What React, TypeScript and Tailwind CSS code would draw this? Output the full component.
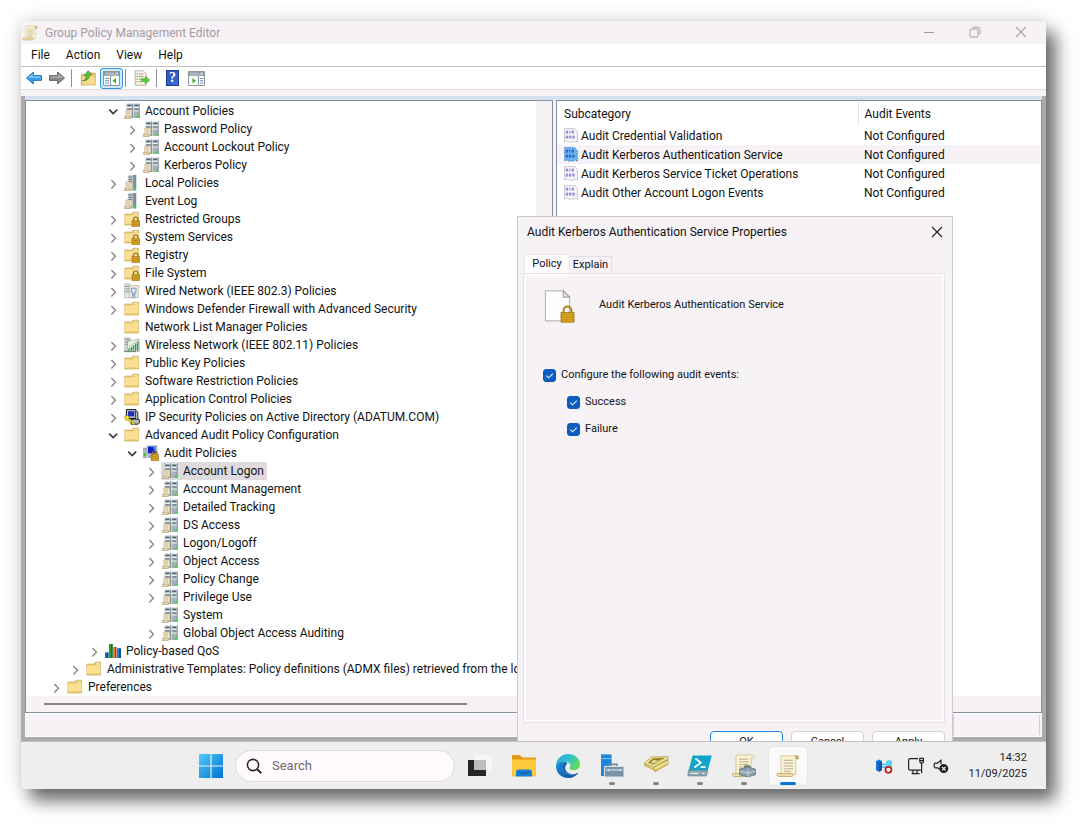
import type { ReactNode } from "react";

type IconName =
  | "servers"
  | "server"
  | "folder"
  | "folderLock"
  | "wired"
  | "wireless"
  | "ipsec"
  | "audit"
  | "qos";

type Node = {
  level: number;
  icon: IconName;
  label: string;
  open?: boolean;
  leaf?: boolean;
  selected?: boolean;
};

const tree: Node[] = [
  { level: 3, icon: "servers", label: "Account Policies", open: true },
  { level: 4, icon: "servers", label: "Password Policy" },
  { level: 4, icon: "servers", label: "Account Lockout Policy" },
  { level: 4, icon: "servers", label: "Kerberos Policy" },
  { level: 3, icon: "server", label: "Local Policies" },
  { level: 3, icon: "server", label: "Event Log", leaf: true },
  { level: 3, icon: "folderLock", label: "Restricted Groups" },
  { level: 3, icon: "folderLock", label: "System Services" },
  { level: 3, icon: "folderLock", label: "Registry" },
  { level: 3, icon: "folderLock", label: "File System" },
  { level: 3, icon: "wired", label: "Wired Network (IEEE 802.3) Policies" },
  { level: 3, icon: "folder", label: "Windows Defender Firewall with Advanced Security" },
  { level: 3, icon: "folder", label: "Network List Manager Policies", leaf: true },
  { level: 3, icon: "wireless", label: "Wireless Network (IEEE 802.11) Policies" },
  { level: 3, icon: "folder", label: "Public Key Policies" },
  { level: 3, icon: "folder", label: "Software Restriction Policies" },
  { level: 3, icon: "folder", label: "Application Control Policies" },
  { level: 3, icon: "ipsec", label: "IP Security Policies on Active Directory (ADATUM.COM)" },
  { level: 3, icon: "folder", label: "Advanced Audit Policy Configuration", open: true },
  { level: 4, icon: "audit", label: "Audit Policies", open: true },
  { level: 5, icon: "servers", label: "Account Logon", selected: true },
  { level: 5, icon: "servers", label: "Account Management" },
  { level: 5, icon: "servers", label: "Detailed Tracking" },
  { level: 5, icon: "servers", label: "DS Access" },
  { level: 5, icon: "servers", label: "Logon/Logoff" },
  { level: 5, icon: "servers", label: "Object Access" },
  { level: 5, icon: "servers", label: "Policy Change" },
  { level: 5, icon: "servers", label: "Privilege Use" },
  { level: 5, icon: "servers", label: "System", leaf: true },
  { level: 5, icon: "servers", label: "Global Object Access Auditing" },
  { level: 2, icon: "qos", label: "Policy-based QoS" },
  {
    level: 1,
    icon: "folder",
    label: "Administrative Templates: Policy definitions (ADMX files) retrieved from the local computer.",
  },
  { level: 0, icon: "folder", label: "Preferences" },
];

const indent = ["pl-[22px]", "pl-[41px]", "pl-[60px]", "pl-[79px]", "pl-[98px]", "pl-[117px]"];

const subcategories = [
  { name: "Audit Credential Validation", events: "Not Configured" },
  { name: "Audit Kerberos Authentication Service", events: "Not Configured", selected: true },
  { name: "Audit Kerberos Service Ticket Operations", events: "Not Configured" },
  { name: "Audit Other Account Logon Events", events: "Not Configured" },
];

/* ---------- small icons (16 x 16) ---------- */

function Glyph({ children, size = "size-4" }: { children: ReactNode; size?: string }) {
  return (
    <svg viewBox="0 0 16 16" className={`${size} shrink-0`} aria-hidden="true">
      {children}
    </svg>
  );
}

function MiniScroll() {
  return (
    <>
      <path d="M1.8 7h6v7.5h-6z" fill="#f3e7c6" stroke="#b3a27b" strokeWidth=".6" />
      <path d="M.4 13.2h6v2.3h-6z" fill="#e6d5aa" stroke="#a89873" strokeWidth=".6" />
      <path d="M3 9h3M3 11h3" stroke="#a49a86" strokeWidth=".6" />
    </>
  );
}

function Tower({ x }: { x: number }) {
  return (
    <g transform={`translate(${x} 0)`}>
      <path d="M0 1 1.8 0h4.4v15H0z" fill="#a3b1b9" />
      <path d="M0 1 1.8 0h4.4l-1 1.2H0z" fill="#dfe7ea" />
      <path d="M1 1.8h3.6v1H1z" fill="#3d474d" />
      <path d="M0 3.8h6.2V5H0zM0 7.6h6.2v.9H0z" fill="#e9eff1" />
      <path d="M1 5.6h3.8v.8H1z" fill="#5a6870" />
      <path d="M5.4.8h.8V15h-.8z" fill="#7b8b94" />
    </g>
  );
}

function ServerBase() {
  return (
    <>
      <path d="M3.8.8 5.8 0h6.4v15.400H3.800z" fill="#c4ced3" />
      <path d="M4.6 2h3.8M4.6 4.4h3.8M4.6 6.600h3.800" stroke="#56646c" strokeWidth=".9" />
      <path d="M9.2 0h3v15.400h-3z" fill="#7a8d98" />
    </>
  );
}

function TreeIcon({ name }: { name: IconName }) {
  switch (name) {
    case "servers":
      return (
        <Glyph>
          <Tower x={2.6} />
          <Tower x={9.4} />
          <MiniScroll />
          <path d="M12.800 12.600h2v2h-2z" fill="#35e021" />
        </Glyph>
      );
    case "server":
      return (
        <Glyph>
          <ServerBase />
          <path d="M9.800 12.600h2v2h-2z" fill="#35e021" />
          <MiniScroll />
        </Glyph>
      );
    case "folder":
    case "folderLock":
      return (
        <Glyph>
          <path d="M.8 3h7l1.2-1.8h5.6v12.9H.8z" fill="#e9c96e" stroke="#c9a652" strokeWidth=".6" />
          <path d="M9.6 2h4.2v1.5H9.6z" fill="#fffbe9" stroke="#c9a652" strokeWidth=".4" />
          <path d="M1 4.6h8l1-1h4.4v10.2H1z" fill="#fbdf92" />
          <path d="M1 13.2h13.6" stroke="#d0a94f" strokeWidth=".8" />
          {name === "folderLock" && (
            <>
              <path d="M9.5 10V8.2a2.2 2.2 0 0 1 4.4 0V10" fill="none" stroke="#8a6d22" strokeWidth="1.2" />
              <path d="M8 9.6h7.6v6H8z" fill="#d7a323" stroke="#8f6a10" strokeWidth=".6" />
              <path d="M8.4 11.5h6.9M8.4 13.4h6.9" stroke="#a67c16" strokeWidth=".6" />
            </>
          )}
        </Glyph>
      );
    case "wired":
      return (
        <Glyph>
          <path d="M.6 1h5.800v14H.6z" fill="#dfe7ea" stroke="#9aa9b1" strokeWidth=".6" />
          <path d="M1.4 3.4h4M1.4 6h4M1.4 8.600h4" stroke="#6b7a82" strokeWidth=".8" />
          <path d="M5.400 2.600H14.500l1 1.400-1.300 1v9.600H5.400z" fill="#f1ecdf" stroke="#b0a68f" strokeWidth=".6" />
          <path d="M7.400 5.200h4.600v4.300h-1.200v2.400H8.600V9.500H7.400z" fill="#dbe8f5" stroke="#4a76a6" strokeWidth=".7" />
          <circle cx="9.700" cy="13.600" r="1.500" fill="#bcd6f2" stroke="#3c6ea6" strokeWidth=".5" />
        </Glyph>
      );
    case "wireless":
      return (
        <Glyph>
          <path d="M.8.8h5.4v13.4H.8z" fill="#d3dde1" stroke="#8a9aa2" strokeWidth=".6" />
          <path d="M1.6 2.6h3.6M1.6 5h3.6M1.6 7.4h3.6" stroke="#61717a" strokeWidth=".8" />
          <path d="M3.5 4.4 15.2 2v12.6H3.5z" fill="#e9efe4" stroke="#8e9a8a" strokeWidth=".6" />
          <path d="M4.3 13.8v-2.4h1.5v2.4zM6.6 13.8V9.9h1.5v3.9zM8.8 13.8V8.2h1.5v5.6zM11 13.8V6.4h1.4v7.4zM13 13.8V4.4h1.4v9.4z" fill="#2c9b58" />
          <path d="M4.2 10.2 14 3.6" stroke="#7cc39a" strokeWidth=".6" />
          <path d="M0 14.6h12" stroke="#6f7f78" strokeWidth="1" />
        </Glyph>
      );
    case "ipsec":
      return (
        <Glyph>
          <path d="M2.4.6h9.4v8.8H2.4z" fill="#c9cdd2" stroke="#111" strokeWidth="1" />
          <path d="M4 2.2h6.4v5.2H4z" fill="#1a35b8" />
          <path d="M7 10.2h8l.6 3.4-1.4 1.6H7z" fill="#b9bdc1" stroke="#111" strokeWidth=".9" />
          <path d="M11.8 1.6l2 1.6v7" fill="none" stroke="#222" strokeWidth="1" />
          <path d="M.6 7.4 3.4 6l2 2.4-.7 1.4 6.2 4.8-1 1.2-2-.6-.2-1.4-1.4-.2-2-2.2L1.6 11z" fill="#f7e51a" stroke="#6b6208" strokeWidth=".5" />
        </Glyph>
      );
    case "audit":
      return (
        <Glyph>
          <path d="M.4 3h3v9.8h-3z" fill="#aab4ba" stroke="#7a868d" strokeWidth=".5" />
          <path d="M1 8h1.5v3H1z" fill="#3fbf3a" />
          <path d="M4 .8h10v8.6H4z" fill="#cdd6de" stroke="#8695a3" strokeWidth=".6" />
          <path d="M5 1.6h8v6.8H5z" fill="#0a1ec8" />
          <path d="M9.5 1.6H13v6.8z" fill="#3f8cf0" />
          <path d="M4.5 10h6v3h-6z" fill="#a7b1b8" />
          <path d="M9.5 10V8.2a2.2 2.2 0 0 1 4.4 0V10" fill="none" stroke="#8a6d22" strokeWidth="1.2" />
          <path d="M8 9.6h7.6v6H8z" fill="#dba524" stroke="#8f6a10" strokeWidth=".6" />
          <path d="M8.4 11.5h6.9M8.4 13.4h6.9" stroke="#a67c16" strokeWidth=".6" />
        </Glyph>
      );
    case "qos":
      return (
        <Glyph>
          <path d="M0 9.4h3.4V15H0z" fill="#0f6fc4" />
          <path d="M4 1h3.6v14H4z" fill="#2f9e3b" />
          <path d="M6 1h1.6v14H6z" fill="#187526" />
          <path d="M8 4h3.4v11H8z" fill="#e9794a" />
          <path d="M10 4h1.4v11H10z" fill="#a3401c" />
          <path d="M12 5.2h3.8V15H12z" fill="#1c86de" />
          <path d="M14.2 5.2h1.6V15h-1.6zM2.2 9.4h1.2V15H2.2z" fill="#0a3e78" />
        </Glyph>
      );
  }
}

function ScrollPaper({ size = "size-4" }: { size?: string }) {
  return (
    <Glyph size={size}>
      <path d="M3.4 1.2h10.2c1 0 1.6.6 1.4 1.6l-1.8.4v10.4H3.400z" fill="#fbf3d3" stroke="#cdbb8a" strokeWidth=".5" />
      <path d="M12.600 1.200h1.200c1.100 0 1.400 1 1 2h-1.600c.2-1-.2-1.500-.6-2z" fill="#d9be74" stroke="#a58c4c" strokeWidth=".4" />
      <path d="M.9 13h9.6c1.2 0 1.2 2-.2 2H2c-1.3 0-1.6-1.2-1.1-2z" fill="#f0dea8" stroke="#b8a060" strokeWidth=".5" />
      <path d="M5.2 4.2h6.2M5.2 6.1h6.2M5.2 8h6.2M5.2 9.9h6.2M5.2 11.6h4.6" stroke="#b0a78c" strokeWidth=".6" />
    </Glyph>
  );
}

function SubcategoryIcon({ selected }: { selected?: boolean }) {
  const ink = selected ? "#1560b8" : "#857bc9";
  return (
    <svg viewBox="0 0 14 15" className="h-[15px] w-[14px] shrink-0" aria-hidden="true">
      <path
        d="M.6.6h10l2.8 2.8v11l-2-1.4-1.6 1H4.4l-1.6-1-2.2 1z"
        fill={selected ? "#6fb3ef" : "#f6f5fb"}
        stroke={selected ? "#2e7fd0" : "#bdbcc6"}
        strokeWidth=".8"
        strokeDasharray={selected ? "1.2 .6" : undefined}
      />
      <g fill="none" stroke={ink} strokeWidth=".9">
        <path d="M2.2 3h1.400v2.200H2.200zM5.800 2.600v3M8 3h1.400v2.200H8z" />
        <path d="M2.200 8h1.400v2.200H2.200zM5.400 8h1.400v2.200H5.400zM8.800 8h1.400v2.200H8.800z" />
      </g>
    </svg>
  );
}

function Cross({ className = "" }: { className?: string }) {
  return (
    <svg viewBox="0 0 12 12" className={`size-3 ${className}`} aria-hidden="true">
      <path d="m1 1 10 10M11 1 1 11" stroke="currentColor" strokeWidth="1.1" />
    </svg>
  );
}

function Chevron({ open }: { open?: boolean }) {
  return (
    <svg viewBox="0 0 16 16" className="size-4" fill="none" aria-hidden="true">
      {open ? (
        <path d="m4.200 6.600 4 4 4-4" stroke="#3a3a3a" strokeWidth="1.600" />
      ) : (
        <path d="m6.400 5 4 4.200-4 4.200" stroke="#8c8c8c" strokeWidth="1.500" />
      )}
    </svg>
  );
}

/* ---------- window chrome ---------- */

function TitleBar() {
  return (
    <header className="flex h-[23px] items-center bg-[#f7f2f6] pr-0.5 pl-px text-[#a39da2]">
      <ScrollPaper />
      <h1 className="ml-[7px] flex-1 text-[12px]">Group Policy Management Editor</h1>
      <div className="flex h-[21px] items-center self-start">
        <button type="button" aria-label="Minimize" className="flex w-[46px] justify-center">
          <svg viewBox="0 0 12 12" className="size-3" aria-hidden="true">
            <path d="M1 6.5h10" stroke="currentColor" />
          </svg>
        </button>
        <button type="button" aria-label="Restore" className="flex w-[46px] justify-center">
          <svg viewBox="0 0 12 12" className="size-3" fill="none" stroke="currentColor" aria-hidden="true">
            <rect x="1" y="3" width="8" height="8" rx="1" />
            <path d="M3.5 1.2h5A2.4 2.4 0 0 1 11 3.6v5" />
          </svg>
        </button>
        <button type="button" aria-label="Close" className="flex w-[46px] justify-center">
          <Cross />
        </button>
      </div>
    </header>
  );
}

function MenuBar() {
  return (
    <nav className="flex h-[23px] items-center gap-4 border-b border-[#bfbfbf] bg-white pl-2.5 text-[12px]">
      {["File", "Action", "View", "Help"].map((item) => (
        <button key={item} type="button">
          {item}
        </button>
      ))}
    </nav>
  );
}

function Separator() {
  return <span className="h-[18px] w-px bg-[#8e8e8e]" />;
}

function PaneIcon({ mirrored }: { mirrored?: boolean }) {
  return (
    <svg viewBox="0 0 17 15" className="h-[15px] w-[17px]" aria-hidden="true">
      <path d="M.5.5h16v14H.5z" fill="#fbfcfc" stroke="#8d979d" />
      <path d="M1 1h15v4H1z" fill="#8b979f" />
      <path d="M2 2.200h9M2 4h13" stroke="#dfe5e8" strokeWidth=".7" />
      <path d="M12.400 2.200H15" stroke="#fff" strokeWidth="1" />
      {mirrored ? (
        <>
          <path d="M10.500 5v9.500" stroke="#8d979d" />
          <path d="M12 7.500h3M12 9.700h3M12 12h3" stroke="#5b86b5" strokeWidth=".9" />
          <path d="m4.500 7 3.400 2.800-3.400 2.800z" fill="#36ad2b" />
        </>
      ) : (
        <>
          <path d="M7.500 5v9.500" stroke="#8d979d" />
          <path d="M2 7.500h4M2 9.700h4M2 12h4" stroke="#5b86b5" strokeWidth=".9" />
          <path d="M12.900 7 9.500 9.800l3.400 2.800z" fill="#36ad2b" />
        </>
      )}
    </svg>
  );
}

function Toolbar() {
  return (
    <div className="flex h-[23px] items-center border-b border-[#dedcde] bg-white pl-[5px]">
      <button type="button" aria-label="Back">
        <Glyph>
          <path d="M.5 8 7.4 2v3.6h8.1v4.8H7.4V14z" fill="#35a0e8" stroke="#1b6fb5" strokeWidth=".9" />
          <path d="M2.2 7.8 6.6 4v2.4h8v1.4z" fill="#86cdf8" />
        </Glyph>
      </button>
      <button type="button" aria-label="Forward" className="ml-[7px]">
        <Glyph>
          <path d="M15.5 8 8.6 2v3.6H.5v4.8h8.1V14z" fill="#8a8a8a" stroke="#5c5c5c" strokeWidth=".9" />
          <path d="M13.8 7.8 9.4 4v2.4h-8v1.4z" fill="#b4b4b4" />
        </Glyph>
      </button>
      <span className="w-1.5" />
      <Separator />
      <button type="button" aria-label="Up one level" className="ml-2">
        <Glyph>
          <path d="M1.400 4.600h7.200l1.200-1.400h5.400v11.800H1.400z" fill="#f2cf7c" stroke="#b98f38" strokeWidth=".7" />
          <path d="M2 7h13v7.600H2z" fill="#f7d98f" />
          <path d="M2.600 10.600c2.400-.4 3.600-2.200 3.800-5H4L8.200.8l4 4H9.600c-.2 4.200-2.800 6.400-7 5.800z" fill="#58c23c" stroke="#2b7d19" strokeWidth=".6" />
        </Glyph>
      </button>
      <button
        type="button"
        aria-label="Show or hide the console tree"
        aria-pressed="true"
        className="ml-1 flex h-[21px] w-[23px] items-center justify-center rounded-[3px] border border-[#2f97dd] bg-[#cfe8fa]"
      >
        <PaneIcon />
      </button>
      <span className="w-0.5" />
      <Separator />
      <button type="button" aria-label="Export list" className="ml-2">
        <Glyph>
          <path d="M1.2.8h8l3 3v11.4h-11z" fill="#fdf9e6" stroke="#a3a08f" strokeWidth=".8" />
          <path d="M2.6 4h1M2.6 6.6h1M2.6 9.2h1M2.6 11.8h1" stroke="#4a4a4a" />
          <path d="M4.8 4h4.6M4.8 6.6h5M4.8 9.2h3M4.8 11.8h3" stroke="#9c9a8d" />
          <path d="M7.4 8.6h3.8V6.2l4.6 3.9-4.6 3.9v-2.5H7.4z" fill="#5ccb3a" stroke="#3b9a22" strokeWidth=".5" />
        </Glyph>
      </button>
      <span className="w-1.5" />
      <Separator />
      <button
        type="button"
        aria-label="Help"
        className="ml-[9px] h-4 w-[13px] border border-[#1f3b8d] bg-linear-to-br from-[#2b50b8] to-[#3f6fd8] font-['Liberation_Serif',serif] text-[14px] leading-[14px] font-bold text-white"
      >
        ?
      </button>
      <button type="button" aria-label="Show or hide the action pane" className="ml-[9px]">
        <PaneIcon mirrored />
      </button>
    </div>
  );
}

function ConsoleTree() {
  return (
    <section className="flex w-[528px] shrink-0 flex-col border border-[#878ea0] bg-[#f7f2f6]">
      <ul role="tree" className="mr-4 flex-1 overflow-hidden bg-white pt-px">
        {tree.map((node) => (
          <li
            key={node.label}
            role="treeitem"
            aria-expanded={node.leaf ? undefined : !!node.open}
            aria-selected={!!node.selected}
            className={`flex h-[18px] items-center whitespace-nowrap ${indent[node.level]}`}
          >
            {node.leaf ? (
              <span className="w-4 shrink-0" />
            ) : (
              <button type="button" aria-label={`Toggle ${node.label}`} className="shrink-0">
                <Chevron open={node.open} />
              </button>
            )}
            <span
              className={`ml-0.5 flex h-[18px] items-center gap-[5px] rounded-[2px] px-px text-[12px] ${
                node.selected ? "bg-[#dedadd]" : ""
              }`}
            >
              <TreeIcon name={node.icon} />
              <span className="pr-0.5">{node.label}</span>
            </span>
          </li>
        ))}
      </ul>
      <div className="flex h-4 items-center pl-[18px]">
        <span className="h-0.5 w-[423px] bg-[#868686]" />
      </div>
    </section>
  );
}

function SubcategoryList() {
  return (
    <section className="ml-[3px] flex min-w-0 flex-1 flex-col border border-[#878ea0] bg-white">
      <div className="flex-1 pt-px pr-px">
        <table className="w-full table-fixed text-left text-[12px]">
          <thead>
            <tr className="h-6">
              <th scope="col" className="w-[301px] border-r border-[#e4e2e4] pl-[7px] font-normal">
                Subcategory
              </th>
              <th scope="col" className="pl-1.5 font-normal">
                Audit Events
              </th>
            </tr>
          </thead>
          <tbody>
            {subcategories.map((row) => (
              <tr key={row.name} className={`h-[19px] ${row.selected ? "bg-[#f7f2f6]" : ""}`}>
                <td className="p-0 pl-[7px]">
                  <span className="flex items-center gap-[3px] whitespace-nowrap">
                    <SubcategoryIcon selected={row.selected} />
                    {row.name}
                  </span>
                </td>
                <td className="p-0 pl-1.5 whitespace-nowrap">{row.events}</td>
              </tr>
            ))}
          </tbody>
        </table>
      </div>
      <div className="h-4 bg-[#f7f2f6]" />
    </section>
  );
}

/* ---------- properties dialog ---------- */

function Check({ label, className = "" }: { label: string; className?: string }) {
  return (
    <label className={`flex h-[27px] items-center gap-[5px] ${className}`}>
      <span className="grid">
        <input
          type="checkbox"
          defaultChecked
          className="col-start-1 row-start-1 size-[13px] appearance-none rounded-[3px] border border-[#0a5bb8] bg-white checked:bg-[#0a5fc0]"
        />
        <svg viewBox="0 0 13 13" className="pointer-events-none col-start-1 row-start-1 size-[13px]" aria-hidden="true">
          <path d="m3.4 6.6 2.2 2.2 4.2-4.2" fill="none" stroke="#e9f2fb" strokeWidth="1.1" />
        </svg>
      </span>
      {label}
    </label>
  );
}

function PropertiesDialog() {
  return (
    <section
      role="dialog"
      aria-labelledby="dialog-title"
      className="absolute top-[195px] left-[496px] flex h-[560px] w-[436px] flex-col border border-[#cfcbce] bg-[#f7f2f6] px-1.5"
    >
      <header className="flex h-[30px] items-center justify-between pr-[3px] pl-[3px] text-[12px]">
        <h2 id="dialog-title">Audit Kerberos Authentication Service Properties</h2>
        <button type="button" aria-label="Close">
          <Cross className="text-[#1c1c1c]" />
        </button>
      </header>

      <div className="mt-[7px] text-[11px]">
        <div role="tablist" className="flex h-5 items-end">
          <button
            type="button"
            role="tab"
            aria-selected="true"
            className="h-5 w-[46px] rounded-t-[2px] border border-b-0 border-[#e8e3e7] bg-[#fefcfe]"
          >
            Policy
          </button>
          <button
            type="button"
            role="tab"
            aria-selected="false"
            className="h-[18px] w-[42px] border border-b-0 border-l-0 border-[#e3dfe2]"
          >
            Explain
          </button>
        </div>
        <div role="tabpanel" className="mr-0.5 h-[448px] border-2 border-[#fdfbfd] px-[17px] pt-3.5 outline outline-[#e6e3e8]">
          <div className="flex items-center gap-6">
            <svg viewBox="0 0 32 34" className="h-[34px] w-8" aria-hidden="true">
              <path d="M2.500.8h17.800l6.200 6.400v23.600h-24z" fill="#fefefe" stroke="#bdbabd" strokeWidth="1.200" />
              <path d="M20.300.8v6.400h6.200z" fill="#eceaec" stroke="#a5a2a5" strokeWidth="1.200" />
              <path d="M20.600 22.600v-2.200a3.900 3.900 0 0 1 7.800 0v2.200" fill="none" stroke="#a8831f" strokeWidth="2" />
              <path d="M18 22.400h13v9.800H18z" fill="#e0a921" stroke="#94700f" strokeWidth=".8" />
              <path d="M18.400 24.800h12.200M18.400 27.300h12.200M18.400 29.800h12.200" stroke="#b98712" strokeWidth=".9" />
            </svg>
            <p className="pb-1">Audit Kerberos Authentication Service</p>
          </div>
          <fieldset className="mt-[38px]">
            <Check label="Configure the following audit events:" />
            <Check label="Success" className="ml-6" />
            <Check label="Failure" className="ml-6" />
          </fieldset>
        </div>
        <div className="mt-[9px] mr-px flex justify-end gap-2">
          <button type="button" className="h-[22px] w-[73px] rounded-[4px] border border-[#2286dc] bg-white">
            OK
          </button>
          <button type="button" className="h-[22px] w-[73px] rounded-[4px] border border-[#d5d1d4] bg-white">
            Cancel
          </button>
          <button type="button" className="h-[22px] w-[73px] rounded-[4px] border border-[#d5d1d4] bg-white">
            Apply
          </button>
        </div>
      </div>
    </section>
  );
}

/* ---------- taskbar ---------- */

function AppIcon({ children }: { children: ReactNode }) {
  return (
    <svg viewBox="0 0 26 26" className="size-[26px]" aria-hidden="true">
      {children}
    </svg>
  );
}

function TaskButton({
  label,
  running,
  active,
  children,
}: {
  label: string;
  running?: boolean;
  active?: boolean;
  children: ReactNode;
}) {
  return (
    <button
      type="button"
      aria-label={label}
      className={`relative flex h-[38px] w-[38px] items-center justify-center rounded-[4px] ${
        active ? "bg-[#f9f9f9] shadow-[0_0_1px_#bbb]" : ""
      }`}
    >
      {children}
      {active && <span className="absolute bottom-0 left-[11px] h-[3px] w-4 rounded-full bg-[#0a74d6]" />}
      {running && <span className="absolute bottom-0 left-4 h-[3px] w-1.5 rounded-full bg-[#858585]" />}
    </button>
  );
}

function Taskbar() {
  return (
    <footer className="flex h-12 shrink-0 items-center border-t border-[#c3c1c3] bg-[#eeeeee] pr-[19px] pl-[178px] text-[#1f1f1f]">
      <button type="button" aria-label="Start">
        <svg viewBox="0 0 24 24" className="size-6" aria-hidden="true">
          <defs>
            <linearGradient id="start" x1="0" y1="0" x2="1" y2="1">
              <stop offset="0" stopColor="#50ccfb" />
              <stop offset="1" stopColor="#0070d0" />
            </linearGradient>
          </defs>
          <path d="M0 0h11.4v11.4H0zM12.6 0H24v11.4H12.6zM0 12.6h11.4V24H0zM12.6 12.6H24V24H12.6z" fill="url(#start)" />
        </svg>
      </button>

      <label className="ml-3 flex h-8 w-[220px] items-center rounded-full border border-[#dedade] bg-[#fefafe] pl-2.5">
        <svg viewBox="0 0 16 16" className="size-4" fill="none" stroke="#2b2b2b" strokeWidth="1.6" aria-hidden="true">
          <circle cx="7" cy="7" r="5.6" />
          <path d="m11.2 11.2 4 4" strokeWidth="2" />
        </svg>
        <input
          type="text"
          aria-label="Search"
          placeholder="Search"
          className="ml-2.5 w-40 bg-transparent text-[13px] outline-none placeholder:text-[#6d6a6d]"
        />
      </label>

      <div className="ml-1.5 flex gap-1.5">
        <TaskButton label="Task view">
          <AppIcon>
            <path d="M1 7h18v16H1z" fill="#262626" />
            <path d="M7 2h18v15H7z" fill="#f6f6f6" fillOpacity=".9" />
            <path d="M7 7h12v10H7z" fill="#bdbdbd" />
          </AppIcon>
        </TaskButton>
        <TaskButton label="File Explorer">
          <AppIcon>
            <path d="M1 3.400q0-1.400 1.400-1.400h6.400l2.600 2.600h12.200q1.400 0 1.400 1.400v4H1z" fill="#e29a10" />
            <path d="M1 6.400h24v16q0 1.200-1.200 1.200H2.200Q1 23.600 1 22.400z" fill="#fdc93a" />
            <path d="M5 23.600v-4q0-3 3-3h10q3 0 3 3v4z" fill="#1580d8" />
            <path d="M8 19.800h10" stroke="#0c5ca8" strokeWidth="1.200" />
          </AppIcon>
        </TaskButton>
        <TaskButton label="Microsoft Edge">
          <AppIcon>
            <defs>
              <linearGradient id="edgeTop" x1="0" y1="0" x2="1" y2=".5">
                <stop offset="0" stopColor="#2aa5e2" />
                <stop offset=".55" stopColor="#2fc3cf" />
                <stop offset="1" stopColor="#66dc55" />
              </linearGradient>
              <linearGradient id="edgeBottom" x1="0" y1="0" x2="1" y2="1">
                <stop offset="0" stopColor="#1b8fd8" />
                <stop offset="1" stopColor="#0c4f9e" />
              </linearGradient>
            </defs>
            <path d="M1 13A12 12 0 0 1 13 1c7 0 12 4.600 12 10.200 0 3.800-2.800 6-6.200 6-2.600 0-4.400-.9-4.400-1.900 0-.7 1-1.100 1-2.700 0-2.100-2.200-4-5.200-4C5.800 8.600 2.200 10.600 1 13z" fill="url(#edgeTop)" />
            <path d="M1 13c1.200-2.800 4.800-4.600 8.600-4.400-2 1.200-2.600 3.200-2.600 5 0 4.800 4.200 8 9 8 2.700 0 4.800-.7 6.600-1.900.4-.2.8.1.5.6A12 12 0 0 1 13 25C6 25 1 19.800 1 13z" fill="url(#edgeBottom)" />
            <path d="M9.600 8.600c-1.600 1.200-2.600 3-2.600 5 0 4.800 4.200 8 9 8 1.400 0 2.700-.2 3.900-.6-5.900 1-9.700-2.200-9.700-6.200 0-1.900.9-3.200 2.400-4.200-.7-1.200-1.800-1.800-3-2z" fill="#1466bd" />
          </AppIcon>
        </TaskButton>
        <TaskButton label="Server Manager" running>
          <AppIcon>
            <path d="M2 1.400h10.600V23H2z" fill="#1b86dc" />
            <path d="M2 5.600h10.600" stroke="#8cc6f3" strokeWidth="1" />
            <path d="M10.400 13.400v-2h7.800v2" fill="none" stroke="#6f8ba0" strokeWidth="1.600" />
            <path d="M5.600 13.400H25V24H5.600z" fill="#7893a6" stroke="#dfe8ee" strokeWidth="1" />
            <path d="M7 17h16.600M9.400 16v2.400M21.200 16v2.400" stroke="#e4edf3" strokeWidth="1" />
          </AppIcon>
        </TaskButton>
        <TaskButton label="Active Directory" running>
          <AppIcon>
            <path d="M1 10.500 10 15l2 3L1.400 13z" fill="#cdbb57" />
            <path d="M10 13.600 25 6.600v4.600L12 18.600z" fill="#dccb69" stroke="#a6953a" strokeWidth=".7" />
            <path d="M12 15.800 25 8.800" stroke="#f8f3cf" strokeWidth="1" />
            <path d="M1 10.500 8.600 4 25 3.600v2.600L10.600 13.800z" fill="#efe5a2" stroke="#a6953a" strokeWidth=".7" />
            <path d="M5 9.800 9.800 5.400l12.600-.6L11 11.400z" fill="#8b7a1e" />
            <path d="M7.400 9.600 11 6.400l3 1.400 6.600-2.400-9.400 5z" fill="#e9dd8c" />
          </AppIcon>
        </TaskButton>
        <TaskButton label="Windows PowerShell" running>
          <AppIcon>
            <path d="M5.600 2.400h19.200L20.600 18H1.400z" fill="#14a3cb" />
            <path d="M1.400 17.200h19.400L19.400 23H.8z" fill="#8ba3ae" stroke="#6c8794" strokeWidth=".6" />
            <path d="m8.400 5.400 5.400 4.400-6.400 4.600M13.600 14.200h5" fill="none" stroke="#fff" strokeWidth="1.800" />
            <path d="M3.400 20.400h8.400M15 20.400h2.600" stroke="#e6eef1" strokeWidth="1.400" />
          </AppIcon>
        </TaskButton>
        <TaskButton label="Group Policy Management" running>
          <AppIcon>
            <path d="M5 2h16c2 0 2.200 1.600 1.600 3h-2.400v17H5z" fill="#fbf3d3" stroke="#cdbb8a" strokeWidth=".8" />
            <path d="M1.600 20.600H14c1.600 0 1.600 3-.2 3H3.400c-1.800 0-2.600-1.600-1.800-3z" fill="#f0dea8" stroke="#b8a060" strokeWidth=".8" />
            <path d="M8 6.200h9.600M8 8.800h9.600M8 11.400h9.600M8 14h5M8 16.600h1" stroke="#b0a78c" strokeWidth=".9" />
            <path d="M13.800 14.800v-1.600h4.800v1.600" fill="none" stroke="#4b5a63" strokeWidth="1.200" />
            <path d="m8.600 16 9-2 6.800 2.200v5.600l-7.400 2-8.400-2z" fill="#8b9eaa" stroke="#5f717b" strokeWidth=".8" />
            <path d="m8.600 18.200 8.400 2 7.400-2M17 16.600v7.200" fill="none" stroke="#d2dce1" strokeWidth=".9" />
          </AppIcon>
        </TaskButton>
        <TaskButton label="Group Policy Management Editor" active>
          <ScrollPaper size="size-6" />
        </TaskButton>
      </div>

      <div className="ml-auto flex items-center">
        <button type="button" aria-label="Azure Arc">
          <svg viewBox="0 0 18 16" className="h-4 w-[18px]" aria-hidden="true">
            <path d="m1 3.200 3-1.600 3 1.600v9L4 13.800l-3-1.600z" fill="#0f72d2" />
            <path d="m4 4.600 3-1.400v9l-3 1.600z" fill="#0a57ac" />
            <path d="M7 6.400h5M7 9h5" stroke="#4aa8e6" strokeWidth="1.400" />
            <path d="m11 3.200 3-1.600 3 1.600v9l-3 1.600-3-1.600z" fill="#5cd3f4" />
            <circle cx="13.400" cy="11.800" r="3" fill="#fff" stroke="#c01818" strokeWidth="1.700" />
          </svg>
        </button>
        <button type="button" aria-label="Network" className="ml-3.5">
          <svg viewBox="0 0 18 18" className="size-[18px]" fill="none" stroke="#202020" strokeWidth="1.200" aria-hidden="true">
            <path d="M11 1.600H3.200q-1.600 0-1.600 1.600v8.400q0 1.600 1.600 1.600h10.600M6 13.400v3M10 13.400v3M4.600 16.600h8" />
            <path d="M12.800 1.400h3.600v3.200q0 1.600-1.800 1.600t-1.800-1.600zM14.600 6.200v10M12.800 3.600h3.600" />
          </svg>
        </button>
        <button type="button" aria-label="Sound muted" className="ml-2">
          <svg viewBox="0 0 16 16" className="size-4" aria-hidden="true">
            <path d="M6.400 11.200 4.600 9.800H2.400q-1.200 0-1.200-1.200V6.400q0-1.200 1.200-1.200h2L8 2.200v4" fill="none" stroke="#202020" strokeWidth="1.200" />
            <circle cx="10.800" cy="10.600" r="4.500" fill="#1c1c1c" />
            <path d="m9 8.800 3.600 3.600M12.600 8.800 9 12.400" stroke="#fff" strokeWidth="1.200" />
          </svg>
        </button>
        <div className="w-[78px] text-right text-[11px] leading-4">
          <div>14:32</div>
          <div>11/09/2025</div>
        </div>
      </div>
    </footer>
  );
}

export default function App() {
  return (
    <div className="flex min-h-screen flex-col bg-white pt-[21px] pr-[42px] pb-[42px] pl-[21px] font-[Roboto,'Open_Sans',sans-serif] text-[#121212]">
      <div className="flex flex-1 flex-col shadow-[10px_12px_16px_0_rgba(0,0,0,0.55),0_0_18px_rgba(0,0,0,0.16)]">
        <main className="relative flex flex-1 flex-col overflow-hidden">
          <TitleBar />
          <MenuBar />
          <Toolbar />
          <div className="h-1.5 bg-[#f7f2f6]" />
          <div className="flex flex-1 flex-col border-x-4 border-b-4 border-[#aca8ac] bg-[#f7f2f6]">
            <div className="h-1 bg-[#d5e1f1]" />
            <div className="flex flex-1">
              <ConsoleTree />
              <SubcategoryList />
            </div>
            <div className="flex h-6 justify-end border-y border-white px-0.5 py-px">
              <span className="w-[87px] border-x border-[#d2ced1]" />
            </div>
          </div>
          <PropertiesDialog />
        </main>
        <Taskbar />
      </div>
    </div>
  );
}
